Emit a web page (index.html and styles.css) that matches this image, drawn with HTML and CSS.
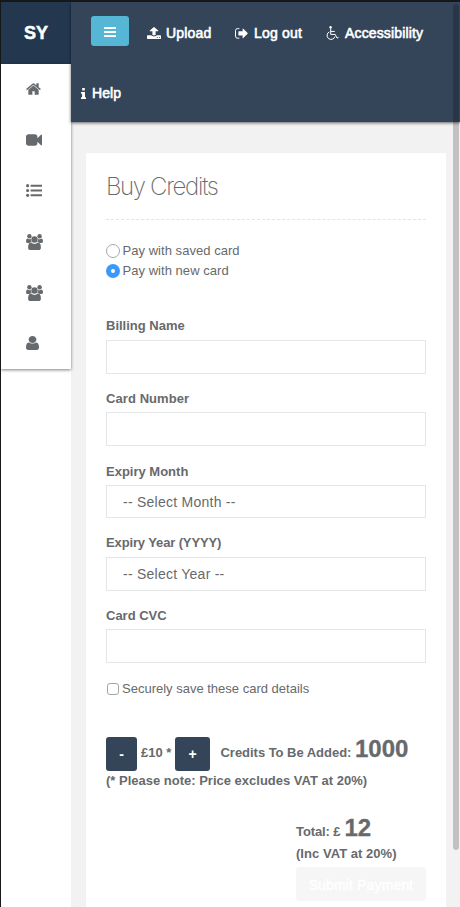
FILE: index.html
```html
<!DOCTYPE html>
<html lang="en">
<head>
<meta charset="utf-8">
<title>Buy Credits</title>
<link rel="stylesheet" href="styles.css">
</head>
<body>
<svg class="defs" aria-hidden="true">
  <symbol id="users" viewBox="0 0 17 16">
    <circle cx="3.4" cy="2.3" r="2.2"/><circle cx="13.6" cy="2.3" r="2.2"/>
    <path d="M1.5 4.6Q3.4 6 5 4.7Q4.4 6.6 5.7 8.1Q4.2 8.1 3.4 9H1.8Q0 9 0 7.4Q0 4.6 1.5 4.6ZM15.5 4.6Q13.6 6 12 4.7Q12.6 6.6 11.3 8.1Q12.8 8.1 13.6 9H15.2Q17 9 17 7.4Q17 4.6 15.5 4.6Z"/>
    <circle cx="8.5" cy="5.5" r="3.2"/>
    <path d="M5.1 8.6Q8.5 11.2 11.9 8.6Q14.9 8.8 14.9 13.4Q14.9 16 12.4 16H4.6Q2.1 16 2.1 13.4Q2.1 8.8 5.1 8.6Z"/>
  </symbol>
</svg>
<div class="app">
  <aside class="side">
    <div class="brand">SY</div>
    <nav class="menu">
      <a><svg class="i-home" viewBox="60 250 1670 1290"><path d="M1472 992v480q0 26-19 45t-45 19h-384v-384h-256v384h-384q-26 0-45-19t-19-45v-480q0-1 .5-3t.5-3l575-474 575 474q1 2 1 6zm223-69l-62 74q-8 9-21 11h-3q-13 0-21-7l-692-577-692 577q-12 8-24 7-13-2-21-11l-62-74q-8-10-7-23.5t11-21.5l719-599q32-26 76-26t76 26l244 204v-195q0-14 9-23t23-9h192q14 0 23 9t9 23v408l219 182q10 8 11 21.5t-7 23.5z"/></svg></a>
      <a><svg class="i-video" viewBox="0 256 1792 1280"><path d="M1792 352v1088q0 42-39 59-13 5-25 5-27 0-45-19l-403-403v166q0 119-84.5 203.5t-203.5 84.5h-704q-119 0-203.5-84.5t-84.5-203.5v-704q0-119 84.5-203.5t203.5-84.5h704q119 0 203.5 84.5t84.5 203.5v165l403-402q18-19 45-19 12 0 25 5 39 17 39 59z"/></svg></a>
      <a><svg class="i-list" viewBox="0 0 16 13"><circle cx="1.6" cy="1.7" r="1.6"/><circle cx="1.6" cy="6.5" r="1.6"/><circle cx="1.6" cy="11.3" r="1.6"/><path d="M4.6.7H16v2H4.6zM4.6 5.5H16v2H4.6zM4.6 10.3H16v2H4.6z"/></svg></a>
      <a><svg class="i-users"><use href="#users"/></svg></a>
      <a><svg class="i-users"><use href="#users"/></svg></a>
      <a><svg class="i-user" viewBox="256 128 1280 1536" preserveAspectRatio="none"><path d="M1536 1399q0 109-62.5 187t-150.5 78h-854q-88 0-150.5-78t-62.5-187q0-85 8.5-160.5t31.5-152 58.5-131 94-89 134.5-34.5q131 128 313 128t313-128q76 0 134.5 34.5t94 89 58.5 131 31.5 152 8.5 160.5zm-256-887q0 159-112.5 271.5t-271.5 112.5-271.5-112.5-112.5-271.5 112.5-271.5 271.5-112.5 271.5 112.5 112.5 271.5z"/></svg></a>
    </nav>
  </aside>
  <div class="main">
    <header class="top">
      <div class="row">
        <button class="burger" aria-label="Menu"><svg viewBox="0 0 12 10"><path d="M0 0h12v2H0zM0 4h12v2H0zM0 8h12v2H0z"/></svg></button>
        <a class="upload"><svg viewBox="64 60 1664 1604" preserveAspectRatio="none"><path d="M1344 1472q0-26-19-45t-45-19-45 19-19 45 19 45 45 19 45-19 19-45zm256 0q0-26-19-45t-45-19-45 19-19 45 19 45 45 19 45-19 19-45zm128-224v320q0 40-28 68t-68 28h-1472q-40 0-68-28t-28-68v-320q0-40 28-68t68-28h427q21 56 70.5 92t110.5 36h256q61 0 110.5-36t70.5-92h427q40 0 68 28t28 68zm-325-648q-17 40-59 40h-256v448q0 26-19 45t-45 19h-256q-26 0-45-19t-19-45v-448h-256q-42 0-59-40-17-39 14-69l448-448q18-19 45-19t45 19l448 448q31 30 14 69z"/></svg><span>Upload</span></a>
        <a class="logout"><svg viewBox="0 0 13 11"><path class="line" d="M4.3.6H2.5Q.5.6.5 2.6V8.2Q.5 10.2 2.5 10.2H4.3"/><path d="M7.6 1.1Q7.6.2 8.3.8L12.6 5Q13 5.4 12.6 5.8L8.3 10Q7.6 10.6 7.6 9.7V7.6H4Q3.4 7.6 3.4 7V3.8Q3.4 3.2 4 3.2H7.6Z"/></svg><span>Log out</span></a>
        <a class="access"><svg viewBox="0 0 13 14"><circle cx="4.6" cy="1.3" r="1.2"/><path class="line" d="M4.7 2.2V8.4H9.2L11 12.1L12.6 11.3M4.8 5.4H8.8M3.4 5.8A4 4 0 1 0 8.9 10.6"/></svg><span>Accessibility</span></a>
      </div>
      <div class="row second">
        <a class="help"><svg viewBox="0 0 5 11"><path d="M1.2 0H3.8V2.4H1.2ZM0 4H4V9.2H5V11H0V9.2H1.1V5.7H0Z"/></svg><span>Help</span></a>
      </div>
    </header>
    <section class="card">
      <h1>Buy Credits</h1>
      <form>
        <div class="choices">
          <label><i class="radio"></i><span class="c1">Pay with saved card</span></label>
          <label><i class="radio on"></i><span class="c2">Pay with new card</span></label>
        </div>
        <div class="field"><label>Billing Name</label><div class="box"></div></div>
        <div class="field low"><label class="number">Card Number</label><div class="box"></div></div>
        <div class="field low"><label>Expiry Month</label><div class="box short">-- Select Month --</div></div>
        <div class="field"><label class="year">Expiry Year (YYYY)</label><div class="box">-- Select Year --</div></div>
        <div class="field low"><label>Card CVC</label><div class="box"></div></div>
        <label class="save"><i class="check"></i><span>Securely save these card details</span></label>
        <div class="credits">
          <button class="step minus">-</button><b class="price">£10 *</b><button class="step plus">+</button><b class="added">Credits To Be Added:</b><b class="big">1000</b>
        </div>
        <p class="note">(* Please note: Price excludes VAT at 20%)</p>
        <div class="total">
          <div class="sum"><b>Total: £</b><b class="big">12</b></div>
          <b class="inc">(Inc VAT at 20%)</b>
          <button class="submit">Submit Payment</button>
        </div>
      </form>
    </section>
  </div>
</div>
<div class="scroll"></div>
</body>
</html>
```
FILE: styles.css
```css
* { box-sizing: border-box; }
html, body { height: 100%; overflow: hidden; }
body {
  margin: 0;
  border-top: 2px solid #161719;
  border-left: 1px solid #161719;
  background: #f2f2f2;
  color: #676a6c;
  font: 13px/20px "Liberation Sans", Arial, sans-serif;
}
button { border: 0; padding: 0; font: inherit; }
h1, p { margin: 0; }
svg { display: block; fill: currentColor; flex: none; }
.defs { position: absolute; width: 0; height: 0; }
.line { fill: none; stroke: currentColor; stroke-width: 1; }
.app { display: flex; height: 100%; }

.side { width: 70px; flex: none; background: #fff; }
.brand {
  height: 62px; line-height: 63px; text-align: center;
  background: #23384f; color: #fff;
  font-size: 18px; font-weight: bold;
  -webkit-text-stroke: .5px #fff;
}
.menu {
  height: 305px; background: #fff;
  box-shadow: 0 1px 3px rgba(0,0,0,.5);
}
.menu a { display: flex; align-items: center; height: 50.8px; padding-left: 25px; }
.i-home { width: 15px; height: 12px; }
.i-video { width: 16px; height: 12px; }
.i-list { width: 16px; height: 13px; }
.i-users { width: 17px; height: 16px; }
.i-user { width: 13px; height: 14px; }

.main { flex: 1; min-width: 0; }
.top {
  position: relative; height: 120px;
  background: #344459; color: #fff;
  box-shadow: 0 1px 3px rgba(0,0,0,.6);
  font-size: 14px; -webkit-text-stroke: .6px #fff;
}
.row { display: flex; align-items: center; height: 62px; padding-left: 20px; }
.row a { display: flex; align-items: center; }
.row svg { -webkit-text-stroke: 0; }
.second { height: 58px; padding-left: 10px; }
.burger {
  display: flex; align-items: center; justify-content: center;
  width: 38px; height: 30px; margin-top: -4px;
  border-radius: 3px; background: #56b6d6; color: #fff;
}
.burger svg { width: 12px; height: 10px; margin-top: 2px; }
.upload { margin-left: 18px; width: 88px; }
.upload svg { width: 14px; height: 12px; margin-right: 5px; }
.upload span { letter-spacing: .2px; }
.logout { width: 91px; }
.logout svg { width: 13px; height: 11px; margin-right: 6px; }
.logout span { letter-spacing: .2px; }
.access svg { width: 13px; height: 14px; margin-right: 6px; }
.access span { letter-spacing: .15px; }
.help svg { width: 5px; height: 11px; margin-right: 6px; }
.help span { letter-spacing: .1px; }

.card { height: 760px; margin: 31px 14px 0 15px; padding: 20px; background: #fff; }
h1 {
  height: 47px; line-height: 28px;
  border-bottom: 1px dashed #e2e4e5;
  font-family: Inter, "Liberation Sans", sans-serif;
  font-size: 24px; font-weight: 200; letter-spacing: -1.35px;
}
.choices { margin-top: 21px; height: 75px; }
.choices label { display: flex; align-items: center; height: 20px; }
.radio { width: 14px; height: 14px; margin-right: 2.5px; border: 1px solid #a8a8a8; border-radius: 50%; }
.radio.on { border: 5px solid #3b99fc; }
.c1, .c2 { letter-spacing: .04px; }
.field { height: 72.25px; }
.field label { display: block; height: 24px; font-weight: bold; }
.low label { padding-top: 1px; }
.field .number { letter-spacing: .08px; }
.field .year { letter-spacing: -.13px; }
.box {
  height: 34px; padding-left: 16px; border: 1px solid #e5e6e7;
  font-size: 14px; line-height: 33px; letter-spacing: .25px;
}
.short { height: 33px; }
.save { display: flex; align-items: center; height: 20px; margin-top: 2px; }
.check { width: 12px; height: 12px; margin: 0 3px 0 1px; border: 1px solid #a5a5a5; border-radius: 3px; }
.credits { display: flex; height: 34px; margin-top: 38px; line-height: 31px; }
.step { height: 34px; border-radius: 3px; background: #344459; color: #fff; font-size: 14px; font-weight: bold; line-height: 35px; }
.minus { width: 31px; }
.price { width: 38px; padding-left: 4px; white-space: nowrap; }
.plus { width: 35px; }
.added { width: 145px; padding-left: 10.5px; white-space: nowrap; letter-spacing: -.03px; }
.big { font-size: 24px; line-height: 24px; -webkit-text-stroke: .3px; }
.note { font-weight: bold; white-space: nowrap; }
.total { width: 130px; margin: 25px 0 0 auto; }
.sum { display: flex; height: 27px; gap: 4px; white-space: nowrap; line-height: 32px; letter-spacing: -.1px; }
.inc { display: block; height: 24px; line-height: 21px; white-space: nowrap; letter-spacing: .04px; }
.submit {
  width: 130px; height: 34px; border-radius: 3px;
  background: #f6f6f6; color: #fff; font-size: 14px; line-height: 36px;
  letter-spacing: .15px;
  -webkit-text-stroke: .5px #fff;
}
.scroll {
  position: absolute; top: 4px; right: 1px; width: 6px; height: 846px;
  border-radius: 3px; background: rgba(0,0,0,.2);
}
```
